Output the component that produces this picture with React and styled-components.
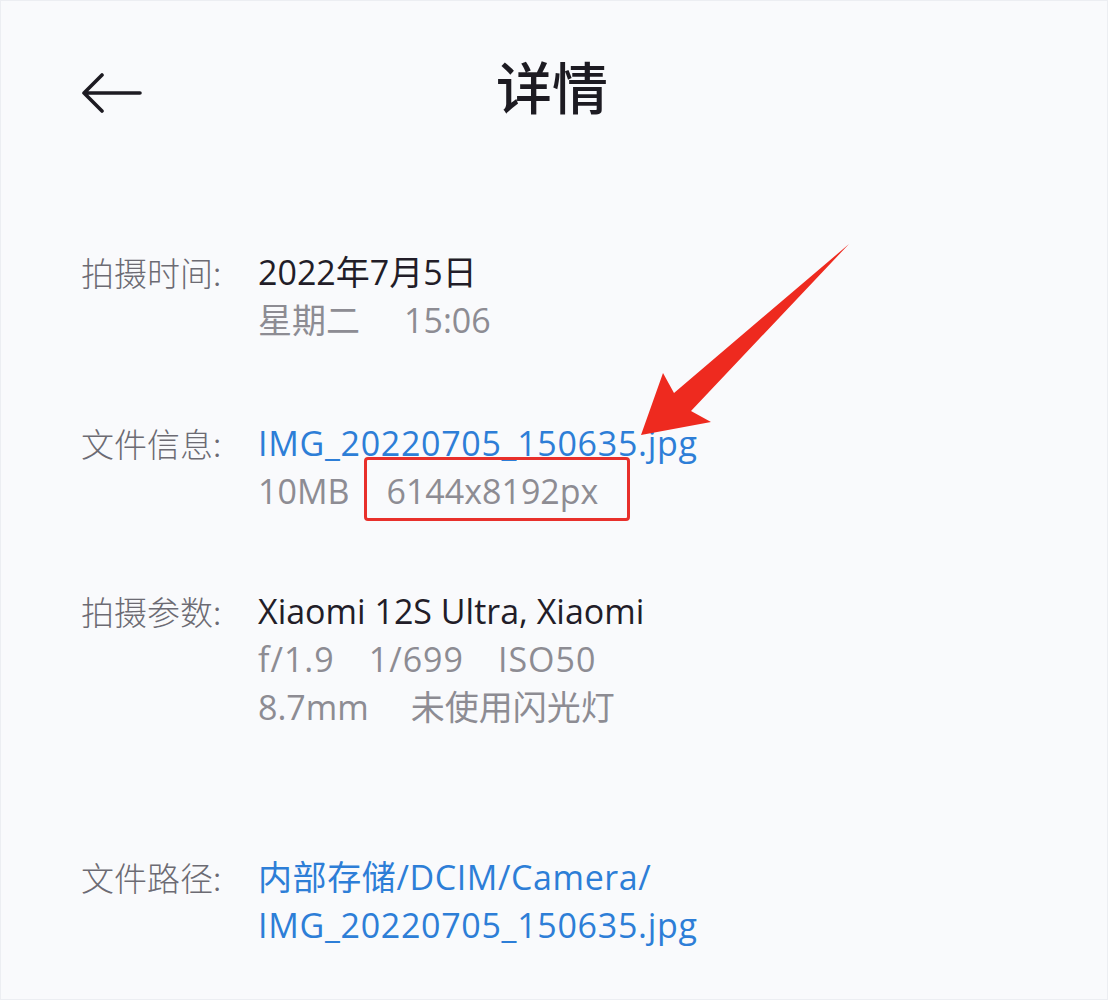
import React from 'react'
import styled, { createGlobalStyle } from 'styled-components'

const GlobalStyle = createGlobalStyle`
  html, body { margin: 0; padding: 0; background: #f9fafc; }
  body { font-family: "Open Sans", "Noto Sans CJK SC", sans-serif; }
`

const Page = styled.div`
  position: relative;
  box-sizing: border-box;
  width: 1108px;
  height: 1000px;
  border: 1px solid #eceef2;
  background: #f9fafc;
  padding: 0 80px;
`

const Header = styled.div`
  position: relative;
  height: 180px;
  display: flex;
  align-items: center;
  justify-content: center;
`

const BackButton = styled.button`
  position: absolute;
  left: 0;
  top: 72px;
  border: 0;
  padding: 0;
  background: none;
  line-height: 0;
`

const Title = styled.h1`
  margin: -14px 4px 0 0;
  font-family: "Noto Sans CJK SC", sans-serif;
  font-size: 56px;
  font-weight: 500;
  color: #1d1b22;
`

const Section = styled.div`
  display: grid;
  grid-template-columns: 177px 1fr;
  margin-top: ${p => p.$gap}px;
`

const Label = styled.div`
  font-family: "Noto Sans CJK SC", sans-serif;
  font-size: 33px;
  line-height: 48px;
  color: #6c6b73;
  font-weight: 300;
`

const Values = styled.div`
  display: flex;
  flex-direction: column;
`

const Line = styled.div`
  display: flex;
  gap: ${p => p.$gap || 0}px;
  font-size: 34px;
  line-height: 48px;
  letter-spacing: ${p => p.$track || 0}px;
  color: ${p => p.$tone === 'main' ? '#221d28' : p.$tone === 'link' ? '#2d7ed7' : '#8d8c93'};
  white-space: nowrap;
`

const Boxed = styled.span`
  position: relative;
  &::after {
    content: '';
    position: absolute;
    left: -22px;
    right: -32px;
    top: -10px;
    bottom: -6px;
    border: 3px solid #e8302b;
    border-radius: 4px;
  }
`

const Overlay = styled.svg`
  position: absolute;
  left: 0;
  top: 0;
  pointer-events: none;
`

const rows = [
  {
    label: '拍摄时间:',
    gap: 67,
    lines: [
      { tone: 'main', parts: ['2022年7月5日'] },
      { tone: 'sub', gap: 44, parts: ['星期二', '15:06'] },
    ],
  },
  {
    label: '文件信息:',
    gap: 75,
    lines: [
      { tone: 'link', track: 0.7, parts: ['IMG_20220705_150635.jpg'] },
      { tone: 'sub', gap: 37, parts: ['10MB', 'box:6144x8192px'] },
    ],
  },
  {
    label: '拍摄参数:',
    gap: 72,
    lines: [
      { tone: 'main', parts: ['Xiaomi 12S Ultra, Xiaomi'] },
      { tone: 'sub', gap: 34, track: 1, parts: ['f/1.9', '1/699', 'ISO50'] },
      { tone: 'sub', gap: 42, parts: ['8.7mm', '未使用闪光灯'] },
    ],
  },
  {
    label: '文件路径:',
    gap: 122,
    lines: [
      { tone: 'link', track: 0.6, parts: ['内部存储/DCIM/Camera/'] },
      { tone: 'link', track: 0.7, parts: ['IMG_20220705_150635.jpg'] },
    ],
  },
]

export default function App() {
  return (
    <>
      <GlobalStyle />
      <Page>
        <Header>
          <BackButton aria-label="返回">
            <svg width="62" height="40" viewBox="0 0 62 40">
              <path d="M3 20 H59 M21 2 L3 20 L21 38" fill="none" stroke="#1d1b22" strokeWidth="3.6" strokeLinecap="round" strokeLinejoin="round" />
            </svg>
          </BackButton>
          <Title>详情</Title>
        </Header>

        {rows.map((r, i) => (
          <Section key={i} $gap={r.gap}>
            <Label>{r.label}</Label>
            <Values>
              {r.lines.map((l, j) => (
                <Line key={j} $tone={l.tone} $gap={l.gap} $track={l.track}>
                  {l.parts.map((t, k) =>
                    t.startsWith('box:') ? <Boxed key={k}>{t.slice(4)}</Boxed> : <span key={k}>{t}</span>
                  )}
                </Line>
              ))}
            </Values>
          </Section>
        ))}

        <Overlay width="1108" height="1000" viewBox="0 0 1108 1000">
          <polygon points="848,243 690,410 710,421 640,434 662,372 673,392" fill="#ee2a1f" />
        </Overlay>
      </Page>
    </>
  )
}
